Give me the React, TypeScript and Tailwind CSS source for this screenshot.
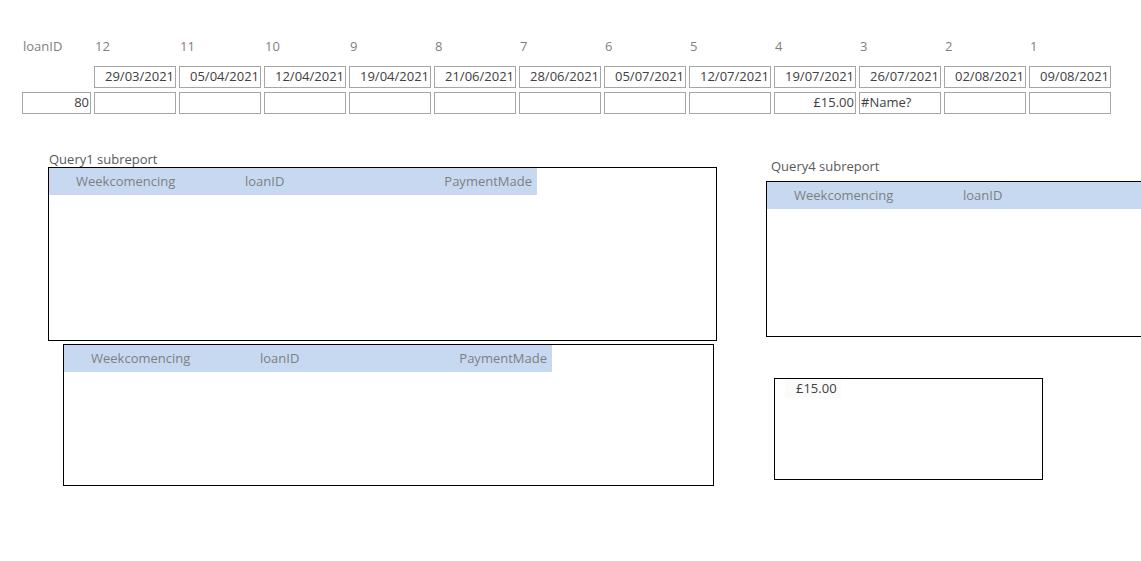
const weeks = ["12", "11", "10", "9", "8", "7", "6", "5", "4", "3", "2", "1"];
const dates = [
  "29/03/2021",
  "05/04/2021",
  "12/04/2021",
  "19/04/2021",
  "21/06/2021",
  "28/06/2021",
  "05/07/2021",
  "12/07/2021",
  "19/07/2021",
  "26/07/2021",
  "02/08/2021",
  "09/08/2021",
];
const values: { text: string; align: "left" | "right" }[] = dates.map((_, i) =>
  i === 8 ? { text: "£15.00", align: "right" } : i === 9 ? { text: "#Name?", align: "left" } : { text: "", align: "right" }
);

function Cell({ children, align = "right", w = "w-[82px]" }: { children?: React.ReactNode; align?: "left" | "right"; w?: string }) {
  return (
    <div
      className={`${w} flex h-[22px] shrink-0 items-center border border-[#a6a6a6] text-[13px] text-[#404040] ${
        align === "right" ? "justify-end pr-[1px]" : "justify-start pl-[1px]"
      }`}
    >
      {children}
    </div>
  );
}

function HeaderBand({ width, cols }: { width: string; cols: boolean }) {
  return (
    <div className={`${width} flex h-[27px] items-center bg-[#c6d9f1] text-[13px] text-[#7f7f7f]`}>
      <span className="ml-[27px] w-[169px]">Weekcomencing</span>
      <span>loanID</span>
      {cols && <span className="ml-auto mr-[5px]">PaymentMade</span>}
    </div>
  );
}

export default function App() {
  return (
    <div
      className="relative h-[561px] w-[1141px] overflow-hidden bg-white"
      style={{ fontFamily: '"Open Sans", "Liberation Sans", sans-serif' }}
    >
      {/* page header */}
      <div className="pl-[22px] pt-[37px]">
        <div className="flex h-[18px] gap-[3px] text-[13px] leading-[18px] text-[#7f7f7f]">
          <div className="w-[69px] pl-[1px]">loanID</div>
          {weeks.map((w) => (
            <div key={w} className="w-[82px] pl-[1px]">
              {w}
            </div>
          ))}
        </div>
        <div className="mt-[11px] flex gap-[3px]">
          <div className="w-[69px]" />
          {dates.map((d) => (
            <Cell key={d}>{d}</Cell>
          ))}
        </div>
        <div className="mt-[4px] flex gap-[3px]">
          <Cell w="w-[69px]">80</Cell>
          {values.map((v, i) => (
            <Cell key={i} align={v.align}>
              {v.text}
            </Cell>
          ))}
        </div>
      </div>

      {/* subreports */}
      <div className="mt-[38px] flex">
        <div className="ml-[48px] w-[669px] shrink-0">
          <div className="ml-[1px] h-[15px] text-[13px] leading-[15px] text-[#595959]">Query1 subreport</div>
          <div className="h-[174px] border border-black">
            <HeaderBand width="w-[488px]" cols />
          </div>
          <div className="ml-[15px] mt-[3px] h-[142px] w-[651px] border border-black">
            <HeaderBand width="w-[488px]" cols />
          </div>
        </div>

        <div className="ml-[49px] shrink-0">
          <div className="ml-[5px] mt-[7px] h-[22px] text-[13px] leading-[15px] text-[#595959]">Query4 subreport</div>
          <div className="h-[156px] w-[400px] border border-black">
            <HeaderBand width="w-full" cols={false} />
          </div>
          <div className="ml-[8px] mt-[41px] h-[102px] w-[269px] border border-black">
            <div className="ml-[10px] mt-[1px] flex h-[18px] w-[56px] items-center bg-[#fbfbfb] pl-[11px] text-[13px] text-[#404040]">
              £15.00
            </div>
          </div>
        </div>
      </div>
    </div>
  );
}
